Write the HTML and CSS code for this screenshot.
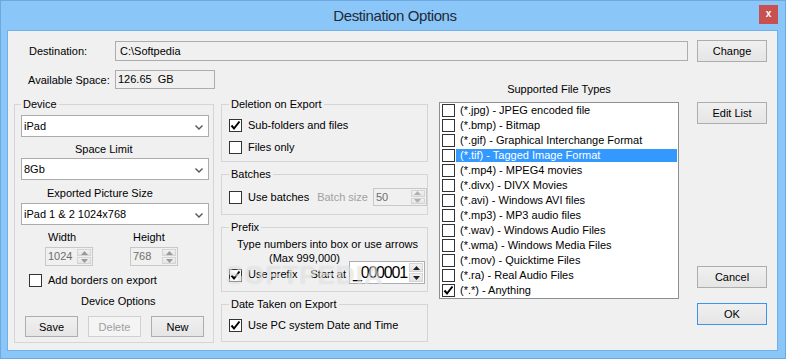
FILE: index.html
```html
<!DOCTYPE html>
<html lang="en">
<head>
    <meta charset="UTF-8">
    <title>Destination Options</title>
    <link rel="stylesheet" href="styles.css">
</head>
<body>
<div class="window">
    <div class="titlebar">
        <span class="title">Destination Options</span>
        <span class="close">x</span>
    </div>
    <div class="client">
        <div class="main">
            <div class="field-row dest-row">
                <span class="field-label">Destination:</span>
                <div class="textbox dest">C:\Softpedia</div>
            </div>
            <div class="field-row space-row">
                <span class="field-label">Available Space:</span>
                <div class="textbox space">126.65&nbsp; GB</div>
            </div>

            <div class="columns">
                <!-- Device -->
                <fieldset class="group device">
                    <legend>Device</legend>
                    <div class="combo combo-first"><span>iPad</span><svg width="8" height="5" viewBox="0 0 8 5"><polyline points="0.5,0.5 4,4 7.5,0.5" fill="none" stroke="#555" stroke-width="1.4"/></svg></div>
                    <div class="caption cap-limit">Space Limit</div>
                    <div class="combo combo-tight"><span>8Gb</span><svg width="8" height="5" viewBox="0 0 8 5"><polyline points="0.5,0.5 4,4 7.5,0.5" fill="none" stroke="#555" stroke-width="1.4"/></svg></div>
                    <div class="caption cap-size">Exported Picture Size</div>
                    <div class="combo combo-size"><span>iPad 1 &amp; 2 1024x768</span><svg width="8" height="5" viewBox="0 0 8 5"><polyline points="0.5,0.5 4,4 7.5,0.5" fill="none" stroke="#555" stroke-width="1.4"/></svg></div>
                    <div class="size-row">
                        <div class="size-col">
                            <span class="size-label">Width</span>
                            <div class="spin spin-small disabled">
                                <span class="spin-text">1024</span>
                                <span class="spin-btns">
                                    <span class="spin-btn"><svg width="7" height="4" viewBox="0 0 7 4"><polygon points="0,4 3.5,0 7,4" fill="#9a9a9a"/></svg></span>
                                    <span class="spin-btn"><svg width="7" height="4" viewBox="0 0 7 4"><polygon points="0,0 3.5,4 7,0" fill="#9a9a9a"/></svg></span>
                                </span>
                            </div>
                        </div>
                        <div class="size-col">
                            <span class="size-label">Height</span>
                            <div class="spin spin-small disabled">
                                <span class="spin-text">768</span>
                                <span class="spin-btns">
                                    <span class="spin-btn"><svg width="7" height="4" viewBox="0 0 7 4"><polygon points="0,4 3.5,0 7,4" fill="#9a9a9a"/></svg></span>
                                    <span class="spin-btn"><svg width="7" height="4" viewBox="0 0 7 4"><polygon points="0,0 3.5,4 7,0" fill="#9a9a9a"/></svg></span>
                                </span>
                            </div>
                        </div>
                    </div>
                    <div class="check-row borders-row"><span class="check"></span><span>Add borders on export</span></div>
                    <div class="caption cap-options">Device Options</div>
                    <div class="btn-row">
                        <button class="btn btn-small">Save</button>
                        <button class="btn btn-small" disabled>Delete</button>
                        <button class="btn btn-small">New</button>
                    </div>
                </fieldset>

                <!-- Middle column -->
                <div class="middle">
                    <fieldset class="group deletion">
                        <legend>Deletion on Export</legend>
                        <div class="check-row first-check"><span class="check"><svg width="11" height="11" viewBox="0 0 11 11"><path d="M1.5 5.5 L4 8.5 L9.5 1.5" fill="none" stroke="#000" stroke-width="2"/></svg></span><span>Sub-folders and files</span></div>
                        <div class="check-row second-check"><span class="check"></span><span>Files only</span></div>
                    </fieldset>

                    <fieldset class="group batches">
                        <legend>Batches</legend>
                        <div class="option-row batch-row">
                            <span class="check"></span>
                            <span class="opt-text">Use batches</span>
                            <span class="opt-text muted batch-label">Batch size</span>
                            <div class="spin spin-batch disabled">
                                <span class="spin-text">50</span>
                                <span class="spin-btns">
                                    <span class="spin-btn"><svg width="7" height="4" viewBox="0 0 7 4"><polygon points="0,4 3.5,0 7,4" fill="#b0b0b0"/></svg></span>
                                    <span class="spin-btn"><svg width="7" height="4" viewBox="0 0 7 4"><polygon points="0,0 3.5,4 7,0" fill="#b0b0b0"/></svg></span>
                                </span>
                            </div>
                        </div>
                    </fieldset>

                    <fieldset class="group prefix">
                        <legend>Prefix</legend>
                        <div class="hint hint-one">Type numbers into box or use arrows</div>
                        <div class="hint hint-two">(Max 999,000)</div>
                        <div class="option-row prefix-row">
                            <span class="check"><svg width="11" height="11" viewBox="0 0 11 11"><path d="M1.5 5.5 L4 8.5 L9.5 1.5" fill="none" stroke="#000" stroke-width="2"/></svg></span>
                            <span class="opt-text">Use prefix</span>
                            <span class="opt-text start-label">Start at</span>
                            <div class="spin spin-prefix">
                                <span class="spin-text">_000001</span>
                                <span class="spin-btns">
                                    <span class="spin-btn"><svg width="7" height="4" viewBox="0 0 7 4"><polygon points="0,4 3.5,0 7,4" fill="#222"/></svg></span>
                                    <span class="spin-btn"><svg width="7" height="4" viewBox="0 0 7 4"><polygon points="0,0 3.5,4 7,0" fill="#222"/></svg></span>
                                </span>
                            </div>
                        </div>
                    </fieldset>

                    <fieldset class="group date">
                        <legend>Date Taken on Export</legend>
                        <div class="check-row date-check"><span class="check"><svg width="11" height="11" viewBox="0 0 11 11"><path d="M1.5 5.5 L4 8.5 L9.5 1.5" fill="none" stroke="#000" stroke-width="2"/></svg></span><span>Use PC system Date and Time</span></div>
                    </fieldset>
                </div>

                <!-- File types -->
                <div class="types">
                    <div class="types-title">Supported File Types</div>
                    <ul class="type-list" id="typeList"></ul>
                </div>
            </div>
        </div>

        <div class="side">
            <button class="btn btn-change">Change</button>
            <button class="btn btn-edit">Edit List</button>
            <button class="btn btn-cancel">Cancel</button>
            <button class="btn btn-ok">OK</button>
        </div>

        <div class="watermark">SOFTPEDIA</div>
    </div>
</div>

<script>
    // File types shown in the checked list box
    const types = [
        { text: '(*.jpg) - JPEG encoded file' },
        { text: '(*.bmp) - Bitmap' },
        { text: '(*.gif) - Graphical Interchange Format' },
        { text: '(*.tif) - Tagged Image Format', selected: true },
        { text: '(*.mp4) - MPEG4 movies' },
        { text: '(*.divx) - DIVX Movies' },
        { text: '(*.avi) - Windows AVI files' },
        { text: '(*.mp3) - MP3 audio files' },
        { text: '(*.wav) - Windows Audio Files' },
        { text: '(*.wma) - Windows Media Files' },
        { text: '(*.mov) - Quicktime Files' },
        { text: '(*.ra) - Real Audio Files' },
        { text: '(*.*) - Anything', checked: true }
    ];

    const tick = '<svg width="11" height="11" viewBox="0 0 11 11"><path d="M1.5 5.5 L4 8.5 L9.5 1.5" fill="none" stroke="#000" stroke-width="2"/></svg>';
    const list = document.getElementById('typeList');
    types.forEach(type => {
        const item = document.createElement('li');
        item.className = 'type-item';
        item.innerHTML = `
            <span class="check">${type.checked ? tick : ''}</span>
            <span class="type-label${type.selected ? ' selected' : ''}">${type.text}</span>
        `;
        list.appendChild(item);
    });
</script>
</body>
</html>
```

FILE: styles.css
```css
* { margin: 0; padding: 0; box-sizing: border-box; }
body {
    font-family: 'Liberation Sans', Arial, sans-serif;
    font-size: 11px;
    color: #000;
    background: #8bc6f8;
}
.window {
    width: 786px;
    height: 359px;
    background: #8bc6f8;
    border: 1px solid #6ea8de;
    display: flex;
    flex-direction: column;
}
.titlebar {
    height: 29px;
    display: flex;
    align-items: center;
    padding: 0 7px 0 6px;
}
.title {
    flex: 1;
    text-align: center;
    font-size: 15px;
    letter-spacing: -0.4px;
    color: #1e2a36;
    padding-left: 24px;
}
.close {
    width: 19px;
    height: 19px;
    margin-top: -2px;
    background: #c75050;
    color: #fff;
    font-weight: bold;
    font-size: 10px;
    text-align: center;
    line-height: 17px;
}
.client {
    position: relative;
    flex: 1;
    margin: 0 7px 7px 6px;
    background: #f0f0f0;
    border: 1px solid #74aee6;
    display: flex;
    gap: 9px;
    padding: 9px 10px 0 6px;
}
.main {
    width: 674px;
    display: flex;
    flex-direction: column;
}

/* top rows */
.field-row {
    display: flex;
    align-items: center;
}
.dest-row { margin-top: 1px; }
.space-row { margin-top: 9px; }
.field-label {
    width: 101px;
    padding-left: 15px;
}
.space-row .field-label { padding-left: 14px; }
.textbox {
    height: 20px;
    line-height: 18px;
    border: 1px solid #adadad;
    background: #f0f0f0;
    padding-left: 4px;
}
.dest { flex: 1; }
.space {
    width: 100px;
    height: 19px;
    line-height: 17px;
    padding-left: 2px;
}

/* columns */
.columns {
    display: flex;
    align-items: flex-start;
    margin-top: 9px;
}
.group {
    border: 1px solid #d5d5d5;
    min-width: 0;
}
.group legend {
    padding: 0 2px;
    line-height: 13px;
}
.device {
    width: 200px;
    padding: 0 4px 5px 6px;
}
.middle {
    width: 207px;
    margin-left: 7px;
    display: flex;
    flex-direction: column;
}
.middle .group { padding: 0 2px 0 7px; }

/* combos */
.combo {
    height: 22px;
    background: #fff;
    border: 1px solid #acacac;
    display: flex;
    align-items: center;
    justify-content: space-between;
    padding: 0 5px 0 2px;
}
.combo svg { margin-top: 2px; }
.combo-first { margin-top: 4px; }
.combo-tight { margin-top: 2px; }
.combo-size { margin-top: 3px; }
.caption { line-height: 13px; }
.cap-limit { margin: 6px 0 0 54px; }
.cap-size { margin: 7px 0 0 26px; }
.cap-options { margin: 8px 0 0 60px; }

/* spin boxes */
.size-row {
    display: flex;
    gap: 37px;
    margin: 6px 0 0 24px;
}
.size-col {
    display: flex;
    flex-direction: column;
}
.size-label {
    line-height: 13px;
    padding-left: 3px;
    margin-bottom: 3px;
}
.spin {
    display: flex;
    flex: none;
    background: #fff;
    border: 1px solid #abadb3;
}
.spin.disabled { background: #f0f0f0; border-color: #c8c8c8; }
.spin-text {
    flex: 1;
    padding-left: 2px;
    overflow: hidden;
}
.disabled .spin-text { color: #6d6d6d; }
.spin-btns {
    width: 15px;
    display: flex;
    flex-direction: column;
    padding: 1px 1px 1px 0;
    gap: 1px;
}
.spin-btn {
    flex: 1;
    display: flex;
    align-items: center;
    justify-content: center;
    background: linear-gradient(#f2f2f2, #e3e3e3);
    border: 1px solid #d4d4d4;
}
.spin-small {
    width: 48px;
    height: 19px;
    line-height: 17px;
}
.spin-batch {
    width: 54px;
    height: 18px;
    line-height: 16px;
    margin-left: 5px;
}
.spin-prefix {
    width: 76px;
    height: 23px;
    margin-left: 3px;
}
.spin-prefix .spin-text {
    font-size: 16px;
    letter-spacing: -1.2px;
    line-height: 21px;
    padding-left: 3px;
}

/* checkboxes */
.check {
    width: 13px;
    height: 13px;
    flex: none;
    border: 1px solid #333;
    background: #fff;
    display: flex;
    align-items: center;
    justify-content: center;
}
.check-row {
    display: flex;
    align-items: center;
    gap: 6px;
    line-height: 13px;
    white-space: nowrap;
}
.borders-row { margin: 8px 0 0 8px; }
.first-check { margin-top: 8px; }
.second-check { margin: 9px 0 7px; }
.date-check { margin: 8px 0 9px; }

.option-row {
    display: flex;
    align-items: center;
    white-space: nowrap;
}
.option-row .opt-text { margin-left: 6px; flex: none; }
.muted { color: #a0a0a0; }
.option-row .batch-label { margin-left: 8px; }
.batch-row { margin: 7px 0 8px; }
.batches { margin-top: 6px; }

.prefix { margin-top: 6px; }
.hint { line-height: 14px; white-space: nowrap; }
.hint-one { margin: 3px 0 0 8px; }
.hint-two { margin-left: 40px; }
.prefix-row {
    margin: -4px 0 7px;
    align-items: flex-end;
}
.prefix-row .check { margin-bottom: 2px; }
.prefix-row .opt-text { line-height: 13px; margin-bottom: 3px; }
.option-row .start-label { margin-left: 13px; }
.date { margin-top: 6px; }

/* buttons */
.btn-row {
    display: flex;
    gap: 10px;
    margin: 8px 0 0 4px;
}
.btn {
    font-family: inherit;
    font-size: 11px;
    color: #000;
    height: 22px;
    border: 1px solid #adadad;
    background: linear-gradient(#f0f0f0, #e5e5e5);
}
.btn:disabled {
    color: #a0a0a0;
    border-color: #d0d0d0;
    background: #f4f4f4;
}
.btn-small {
    width: 53px;
    height: 21px;
}

/* file types */
.types {
    width: 240px;
    margin-left: 11px;
}
.types-title {
    text-align: center;
    line-height: 13px;
    margin-top: -15px;
}
.type-list {
    list-style: none;
    margin-top: 6px;
    height: 197px;
    background: #fff;
    border: 1px solid #8f8f8f;
}
.type-item {
    height: 15px;
    display: flex;
    align-items: center;
    padding-left: 2px;
}
.type-label {
    flex: 1;
    height: 13px;
    line-height: 13px;
    margin: 0 1px 0 1px;
    padding-left: 4px;
    white-space: nowrap;
}
.type-label.selected {
    background: #3399ff;
    color: #fff;
}

/* side buttons */
.side {
    width: 70px;
    display: flex;
    flex-direction: column;
}
.side .btn { width: 70px; }
.btn-edit { margin-top: 40px; }
.btn-cancel { margin-top: 142px; }
.btn-ok {
    margin-top: 15px;
    border-color: #3c94ee;
}

.watermark {
    position: absolute;
    left: 218px;
    top: 229px;
    font-size: 26px;
    font-weight: bold;
    letter-spacing: 1px;
    color: rgba(255, 255, 255, 0.45);
    text-shadow: 0 0 1px rgba(140, 140, 140, 0.3);
    pointer-events: none;
}
```
